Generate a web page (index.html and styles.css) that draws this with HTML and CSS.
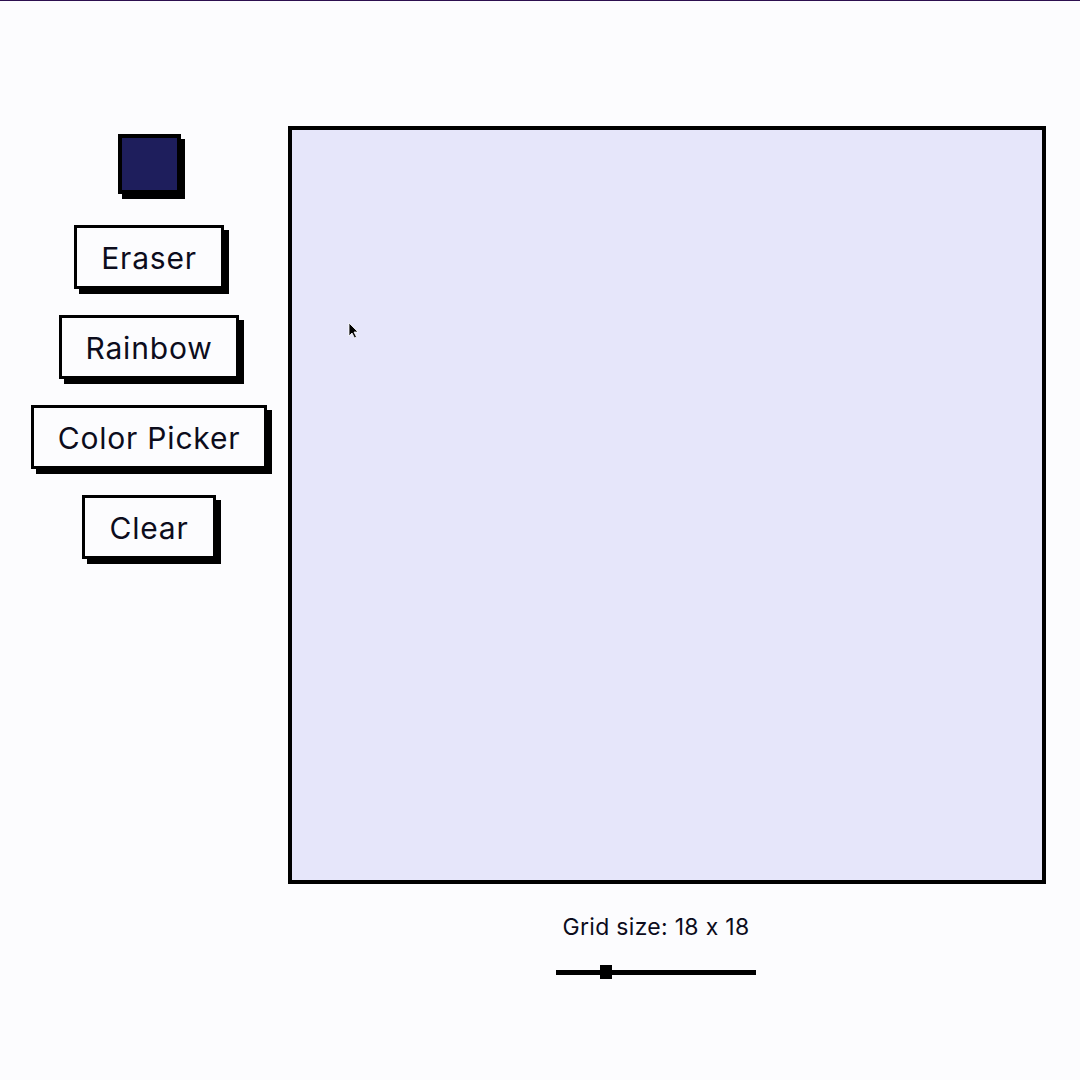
FILE: index.html
```html
<!DOCTYPE html>
<html lang="en">
<head>
<meta charset="utf-8">
<title>Etch-a-Sketch</title>
<link rel="stylesheet" href="styles.css">
</head>
<body>
<main class="app">
  <aside class="tools">
    <div class="swatch" aria-label="Current colour"></div>
    <button class="btn">Eraser</button>
    <button class="btn">Rainbow</button>
    <button class="btn">Color Picker</button>
    <button class="btn">Clear</button>
  </aside>
  <section class="board">
    <div class="canvas">
      <svg class="cursor" width="12" height="18" viewBox="0 0 12 18"><path d="M1 1 L1 14 L4 11 L6.5 16 L8.5 15 L6 10 L10 10 Z" fill="#000" stroke="#fff" stroke-width="0.8"/></svg>
    </div>
    <div class="controls">
      <p class="size-label">Grid size: 18 x 18</p>
      <div class="slider"><span class="thumb"></span></div>
    </div>
  </section>
</main>
</body>
</html>
```

FILE: styles.css
```css
* { box-sizing: border-box; }
html, body { margin: 0; padding: 0; }
body {
  background: #fcfcfe;
  border-top: 1px solid #2c0f4f;
  font-family: Inter, "Noto Sans", sans-serif;
  font-feature-settings: "calt" 0;
  color: #0c0c1c;
  height: 1080px;
  overflow: hidden;
}
.app {
  display: flex;
  align-items: flex-start;
  padding-top: 125px;
}
.tools {
  width: 260px;
  margin-left: 19px;
  margin-right: 9px;
  display: flex;
  flex-direction: column;
  align-items: center;
  gap: 26px;
  padding-top: 8px;
}
.swatch {
  width: 63px;
  height: 60px;
  background: #1e1e5c;
  border: 4px solid #000;
  box-shadow: 4px 5px 0 #000;
  margin-bottom: 5px;
}
.btn {
  font-family: Inter, "Noto Sans", sans-serif;
  font-feature-settings: "calt" 0;
  font-size: 30px;
  letter-spacing: 0.8px;
  line-height: 34px;
  color: #0c0c1c;
  background: #fcfcfe;
  border: 3px solid #000;
  padding: 13px 24px 11px;
  box-shadow: 5px 5px 0 #000;
  border-radius: 0;
}
.board {
  display: flex;
  flex-direction: column;
}
.canvas {
  position: relative;
  width: 758px;
  height: 758px;
  border: 4px solid #000;
  background: #e6e6fa;
}
.cursor {
  position: absolute;
  left: 56px;
  top: 192px;
}
.controls {
  display: flex;
  flex-direction: column;
  align-items: center;
  padding-right: 22px;
}
.size-label {
  margin: 28px 0 0;
  font-size: 23px;
  letter-spacing: 0.3px;
  line-height: 30px;
}
.slider {
  position: relative;
  width: 200px;
  height: 5px;
  background: #000;
  margin-top: 28px;
}
.thumb {
  position: absolute;
  left: 44px;
  top: -5px;
  width: 12px;
  height: 14px;
  background: #000;
}
```
